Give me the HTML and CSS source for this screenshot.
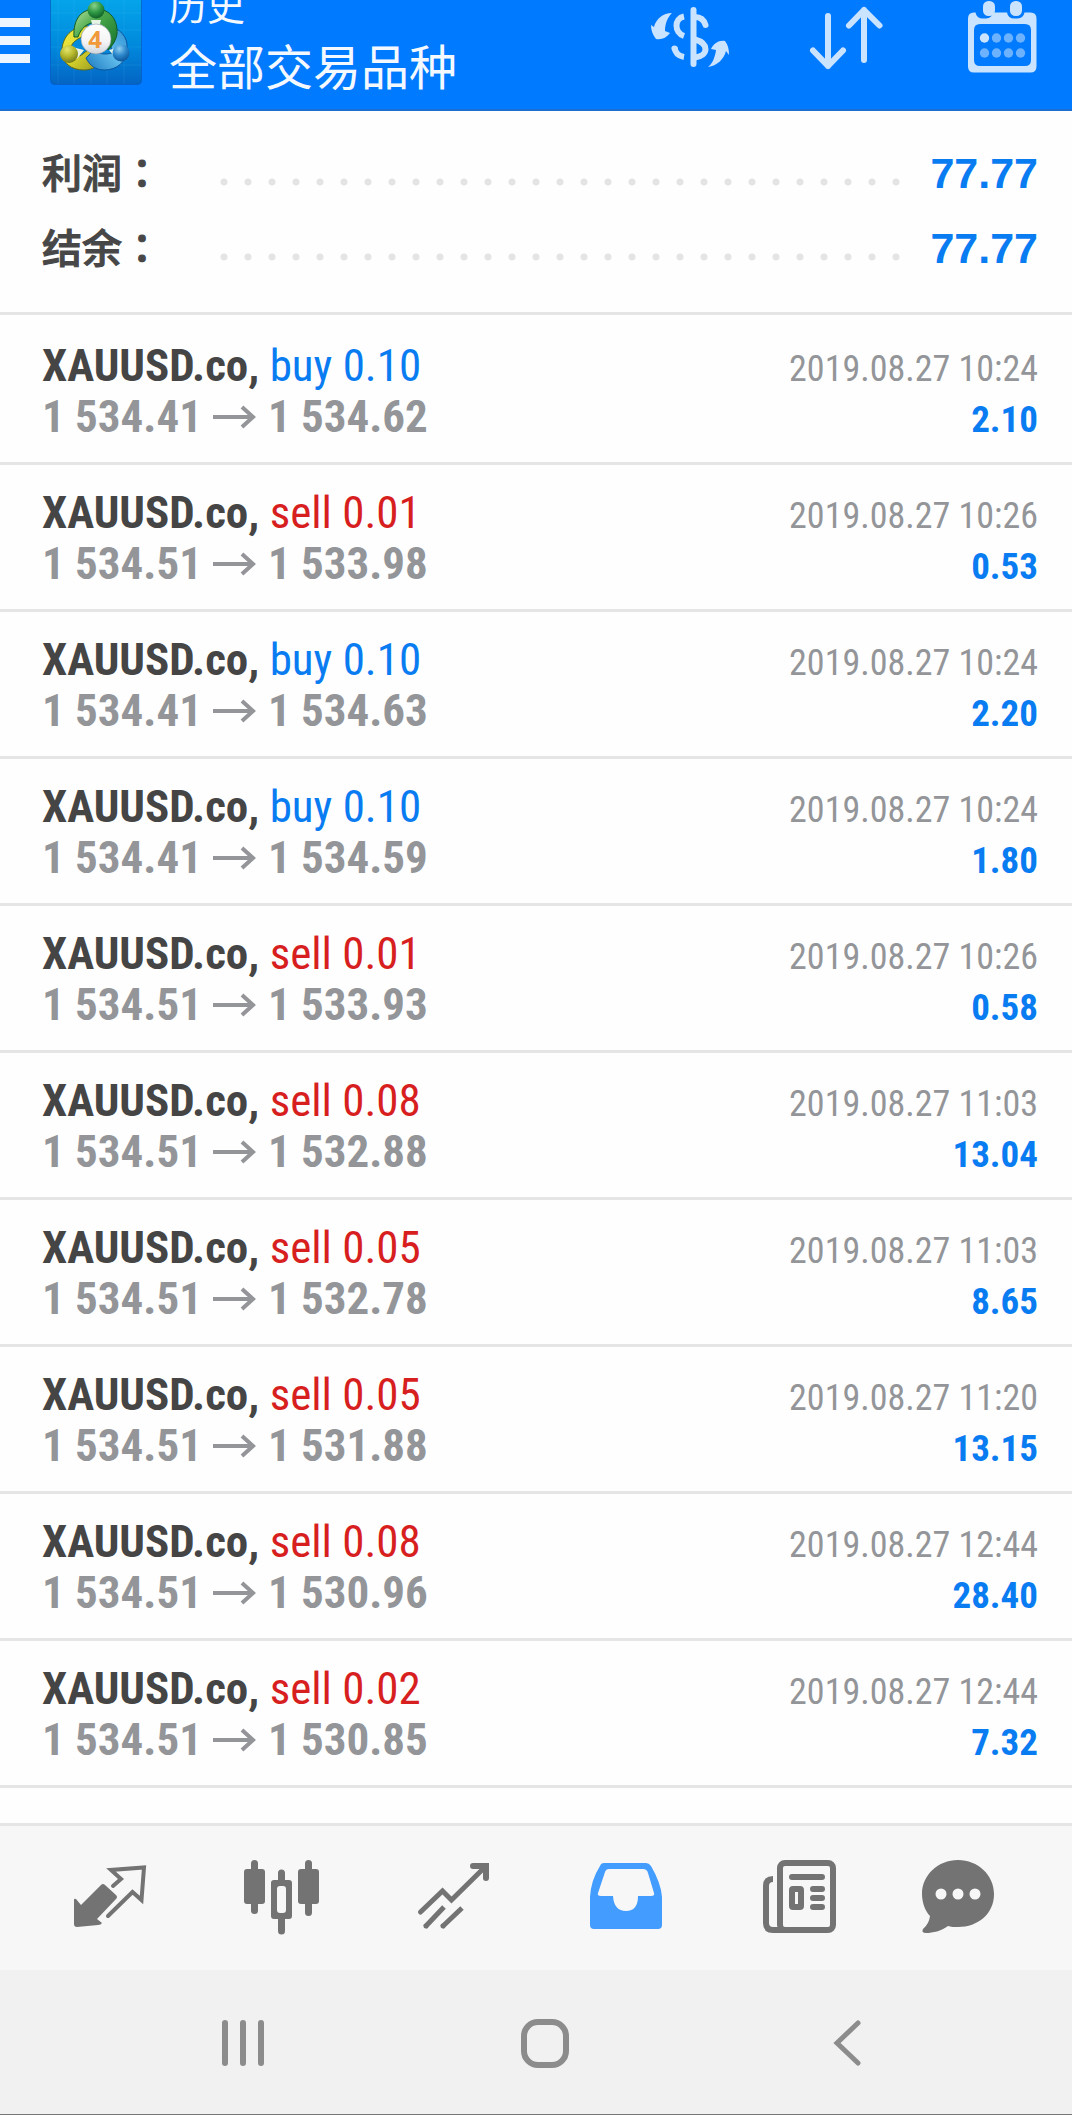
FILE: index.html
```html
<!DOCTYPE html>
<html lang="zh-CN">
<head>
<meta charset="utf-8">
<meta name="viewport" content="width=device-width, initial-scale=1">
<title>历史</title>
<link rel="stylesheet" href="styles.css">
</head>
<body>
<header class="app-bar">
  <button class="menu" type="button" aria-label="菜单">
    <svg width="30" height="45" viewBox="0 0 30 45"><path fill="#fff" fill-opacity=".93" d="M0 0h30v9H0zM0 18h30v9H0zM0 36h30v9H0z"/></svg>
  </button>
  <svg class="logo" width="92" height="85" viewBox="0 0 92 85" role="img" aria-label="MetaTrader 4">
    <defs>
      <linearGradient id="bg" x1="0" y1="0" x2="0" y2="1"><stop offset="0" stop-color="#05a5ea"/><stop offset=".55" stop-color="#0089dc"/><stop offset="1" stop-color="#0464c4"/></linearGradient>
      <linearGradient id="gr" x1="0" y1="0" x2="1" y2="1"><stop offset="0" stop-color="#b5e3a0"/><stop offset=".4" stop-color="#4aa84a"/><stop offset="1" stop-color="#12702c"/></linearGradient>
      <linearGradient id="ye" x1="0" y1="0" x2="1" y2="1"><stop offset="0" stop-color="#f4ef49"/><stop offset=".5" stop-color="#dbd42c"/><stop offset="1" stop-color="#8e9420"/></linearGradient>
      <linearGradient id="bl" x1="1" y1="0" x2="0" y2="1"><stop offset="0" stop-color="#2a8ed2"/><stop offset=".5" stop-color="#61bdeb"/><stop offset="1" stop-color="#1b78c0"/></linearGradient>
      <radialGradient id="gb" cx=".4" cy=".25" r=".8"><stop offset="0" stop-color="#8bd28a"/><stop offset=".5" stop-color="#2f9a46"/><stop offset="1" stop-color="#0c5824"/></radialGradient>
      <radialGradient id="yb" cx=".4" cy=".25" r=".8"><stop offset="0" stop-color="#e6e56f"/><stop offset=".5" stop-color="#b5b72b"/><stop offset="1" stop-color="#6a711a"/></radialGradient>
      <radialGradient id="bb" cx=".4" cy=".25" r=".8"><stop offset="0" stop-color="#8ed0f2"/><stop offset=".5" stop-color="#2d88cc"/><stop offset="1" stop-color="#0b4f94"/></radialGradient>
      <linearGradient id="wh" x1="0" y1="0" x2="0" y2="1"><stop offset="0" stop-color="#fff"/><stop offset=".6" stop-color="#f4f4f6"/><stop offset="1" stop-color="#cfd4da"/></linearGradient>
    </defs>
    <path fill="url(#bg)" stroke="#0a55b8" stroke-opacity=".6" d="M.5-1h91v81q0 4.500-4.500 4.500H5Q.5 84.500.5 80z"/>
    <path stroke="#7fd4ff" stroke-opacity=".1" fill="none" d="M8 0v84M24 0v84M41 0v84M57 0v84M74 0v84M0 13h92M0 30h92M0 47h92M0 65h92"/>
    <path fill="url(#ye)" stroke="#5f6a16" d="M38 26C22 26 12 37 12 51c0 12 9 19 22 19 9 0 14-4 17-9L38 50l-8 6-10-5c0-8 8-14 19-16z"/>
    <path fill="url(#bl)" stroke="#0b559c" d="M58 26c12 2 20 11 19 22 0 14-10 22-23 22-8 0-14-4-18-12l8-8c5 4 11 5 18 3z"/>
    <path fill="url(#gr)" stroke="#105a22" d="M24 37C23 19 31 9 46 9s22 12 21 25c-1 6-4 11-9 16l-4-15-8-13c-9 1-15 6-18 15z"/>
    <path fill="#e6f4e6" d="M41 20h10l-2 8h-6zM22 47l12 3-7 9zM70 47l-11 3 6 7z"/>
    <circle cx="46" cy="10" r="8.500" fill="url(#gb)"/>
    <circle cx="19" cy="54" r="9" fill="url(#yb)"/>
    <circle cx="71" cy="53" r="8.500" fill="url(#bb)"/>
    <circle cx="46" cy="39" r="15" fill="url(#wh)" stroke="#8b9bab" stroke-width=".6"/>
    <text class="logo-digit" x="45" y="48" text-anchor="middle">4</text>
  </svg>
  <div class="titles">
    <p class="section">历史</p>
    <h1 class="symbols">全部交易品种</h1>
  </div>
  <div class="actions">
    <button type="button" aria-label="交易品种">
      <svg width="80" height="74" viewBox="0 0 80 74" fill="none" stroke="#cae3ff" stroke-width="6" stroke-linecap="round">
        <path d="M43.500 10v54"/>
        <path d="M45 17c5 0 9 3 10.500 8"/>
        <path stroke-linecap="butt" d="M34 16.500c-10 2-10 16 0 19.500M34 57c-6-1-9-5-9.500-10"/>
        <path d="M24.500 48.500v0"/>
        <path stroke-linecap="butt" d="M45 39.500c14 4 14 16 0 18"/>
        <g fill="#cae3ff" stroke="none"><path d="M22 13C13 13 6 19 4 27l-3-2c0 6 2 10 5 14 6 1 10-1 14-6l-5-2c0-8 3-14 7-18z"/><path d="M58 67c9-1 16-8 18-16l3 4c0-6-1-10-4-14-6-1-11 2-14 8l5 1c-1 8-4 14-8 17z"/></g>
      </svg>
    </button>
    <button type="button" aria-label="排序">
      <svg width="80" height="74" viewBox="0 0 80 74" fill="none" stroke="#cae3ff" stroke-width="6" stroke-linecap="round" stroke-linejoin="round"><path d="M22 16v50M7 50.500L22 66l15-15.500M58 60V10M43 25.500L58 10l15.500 15.500"/></svg>
    </button>
    <button type="button" aria-label="日期">
      <svg width="80" height="74" viewBox="0 0 80 74">
        <path fill="#cae3ff" fill-rule="evenodd" d="M12 12.500h1.500q1 6 7.500 6h3q6-.5 7-6h14q1 6 7.500 6h3q6-.5 7-6h6q6 0 6 6v48q0 6-6 6H12q-6 0-6-6v-48q0-6 6-6zM18 24q-6 0-6 6v30q0 6 6 6h45q6 0 6-6V30q0-6-6-6z"/>
        <rect x="21" y="1" width="12" height="15" rx="5.500" fill="#cae3ff"/><rect x="48" y="1" width="12" height="15" rx="5.500" fill="#cae3ff"/>
        <g fill="#6db2ff"><circle cx="22.500" cy="38" r="4.700" fill="#cae3ff"/><circle cx="34.500" cy="38" r="4.700"/><circle cx="46.500" cy="38" r="4.700"/><circle cx="58.500" cy="38" r="4.700"/><circle cx="22.500" cy="53" r="4.700"/><circle cx="34.500" cy="53" r="4.700"/><circle cx="46.500" cy="53" r="4.700"/><circle cx="58.500" cy="53" r="4.700"/></g>
      </svg>
    </button>
  </div>
</header>
<svg class="defs" width="0" height="0" aria-hidden="true"><symbol id="to" viewBox="0 0 44 24"><path d="M0 12h41M29 2l11 10-11 10" fill="none" stroke="#939599" stroke-width="4"/></symbol></svg>
<main class="history">
  <dl class="summary">
    <div class="total"><dt>利润<span class="colon" lang="zh-Hant">：</span></dt><dd class="dots"></dd><dd class="sum">77.77</dd></div>
    <div class="total"><dt>结余<span class="colon" lang="zh-Hant">：</span></dt><dd class="dots"></dd><dd class="sum">77.77</dd></div>
  </dl>
  <ul class="deals">
    <li class="deal"><div class="line"><span class="symbol">XAUUSD.co, <span class="buy">buy 0.10</span></span><time>2019.08.27 10:24</time></div><div class="line"><span class="prices">1 534.41<svg class="to"><use href="#to"/></svg>1 534.62</span><b class="profit">2.10</b></div></li>
    <li class="deal"><div class="line"><span class="symbol">XAUUSD.co, <span class="sell">sell 0.01</span></span><time>2019.08.27 10:26</time></div><div class="line"><span class="prices">1 534.51<svg class="to"><use href="#to"/></svg>1 533.98</span><b class="profit">0.53</b></div></li>
    <li class="deal"><div class="line"><span class="symbol">XAUUSD.co, <span class="buy">buy 0.10</span></span><time>2019.08.27 10:24</time></div><div class="line"><span class="prices">1 534.41<svg class="to"><use href="#to"/></svg>1 534.63</span><b class="profit">2.20</b></div></li>
    <li class="deal"><div class="line"><span class="symbol">XAUUSD.co, <span class="buy">buy 0.10</span></span><time>2019.08.27 10:24</time></div><div class="line"><span class="prices">1 534.41<svg class="to"><use href="#to"/></svg>1 534.59</span><b class="profit">1.80</b></div></li>
    <li class="deal"><div class="line"><span class="symbol">XAUUSD.co, <span class="sell">sell 0.01</span></span><time>2019.08.27 10:26</time></div><div class="line"><span class="prices">1 534.51<svg class="to"><use href="#to"/></svg>1 533.93</span><b class="profit">0.58</b></div></li>
    <li class="deal"><div class="line"><span class="symbol">XAUUSD.co, <span class="sell">sell 0.08</span></span><time>2019.08.27 11:03</time></div><div class="line"><span class="prices">1 534.51<svg class="to"><use href="#to"/></svg>1 532.88</span><b class="profit">13.04</b></div></li>
    <li class="deal"><div class="line"><span class="symbol">XAUUSD.co, <span class="sell">sell 0.05</span></span><time>2019.08.27 11:03</time></div><div class="line"><span class="prices">1 534.51<svg class="to"><use href="#to"/></svg>1 532.78</span><b class="profit">8.65</b></div></li>
    <li class="deal"><div class="line"><span class="symbol">XAUUSD.co, <span class="sell">sell 0.05</span></span><time>2019.08.27 11:20</time></div><div class="line"><span class="prices">1 534.51<svg class="to"><use href="#to"/></svg>1 531.88</span><b class="profit">13.15</b></div></li>
    <li class="deal"><div class="line"><span class="symbol">XAUUSD.co, <span class="sell">sell 0.08</span></span><time>2019.08.27 12:44</time></div><div class="line"><span class="prices">1 534.51<svg class="to"><use href="#to"/></svg>1 530.96</span><b class="profit">28.40</b></div></li>
    <li class="deal"><div class="line"><span class="symbol">XAUUSD.co, <span class="sell">sell 0.02</span></span><time>2019.08.27 12:44</time></div><div class="line"><span class="prices">1 534.51<svg class="to"><use href="#to"/></svg>1 530.85</span><b class="profit">7.32</b></div></li>
  </ul>
</main>
<nav class="tabs">
  <button type="button" aria-label="行情">
    <svg width="80" height="80" viewBox="0 0 80 80"><path fill="#737373" d="M31 29Q33 27 35 29l11 10q2 2 0 4L27 63l5 4q-1 2-4 2L7 71q-3 0-3-3V44q0-2 2-1l5 6z"/><path fill="none" stroke="#737373" stroke-width="4" stroke-linecap="round" d="M43 30l8-7-10-9 33-2.500L71.500 44l-9-8L38 60"/></svg>
  </button>
  <button type="button" aria-label="图表">
    <svg width="80" height="80" viewBox="0 0 80 80" fill="#737373"><rect x="2" y="13" width="21" height="35" rx="3"/><rect x="9" y="4" width="7" height="54" rx="3.500"/><rect x="56" y="13" width="21" height="35" rx="3"/><rect x="63" y="4" width="7" height="56" rx="3.500"/><path fill-rule="evenodd" d="M32 24h4v-7a3.500 3.500 0 0 1 7 0v7h4q3 0 3 3v33q0 3-3 3h-4v12a3.500 3.500 0 0 1-7 0V63h-4q-3 0-3-3V27q0-3 3-3zm6 6q-3 0-3 3v21q0 3 3 3h3q3 0 3-3V33q0-3-3-3z"/></svg>
  </button>
  <button type="button" aria-label="交易">
    <svg width="80" height="80" viewBox="0 0 80 80" fill="none" stroke="#737373" stroke-width="5" stroke-linecap="round"><path d="M6.500 56l22-21 9 9L71 11"/><path stroke-width="6" d="M59 10h13v12"/><path stroke-linecap="butt" d="M11 71l19-20M28 71l20-19"/><path d="M12 70v0M29 70v0"/></svg>
  </button>
  <button type="button" aria-label="历史" aria-current="page">
    <svg width="80" height="80" viewBox="0 0 80 80"><path fill="#439cff" fill-rule="evenodd" d="M18 7h42q3 0 5 3 10 17 11 31v28q0 4-4 4H8q-4 0-4-4V41Q5 24 14 10q1-3 4-3zm5 6q-3 0-4 3l-7 21q-1 3 3 3h12q1 15 13 15t12-15h13q4 0 3-3l-6-20q-1-4-5-4z"/></svg>
  </button>
  <button type="button" aria-label="新闻">
    <svg width="80" height="80" viewBox="0 0 80 80" fill="none" stroke="#737373" stroke-width="6"><rect x="22" y="7" width="53" height="67" rx="5"/><path d="M15 23q-7 0-7 7v37q0 7 7 7h14"/><path stroke-linecap="round" d="M34 21h30M55 33h9M55 42h9M55 51h9"/><rect x="34" y="33" width="9" height="18" rx="1"/></svg>
  </button>
  <button type="button" aria-label="消息">
    <svg width="80" height="80" viewBox="0 0 80 80"><path fill="#737373" d="M40 4c20 0 36 15 36 34 0 20-16 33-36 33-4 0-7 0-10-1-7 5-15 7-22 7q-5 0-3-4 6-5 7-13C7 55 4 46 4 38 4 19 20 4 40 4z"/><g fill="#f7f7f7"><circle cx="23" cy="38" r="5.500"/><circle cx="40" cy="38" r="5.500"/><circle cx="57" cy="38" r="5.500"/></g></svg>
  </button>
</nav>
<footer class="system-nav">
  <button type="button" aria-label="最近"><svg width="50" height="50" viewBox="0 0 50 50"><path stroke="#8c8c8c" stroke-width="6" stroke-linecap="round" d="M7 5v40M25 5v40M43 5v40"/></svg></button>
  <button type="button" aria-label="主页"><svg width="50" height="50" viewBox="0 0 50 50"><rect x="4" y="4" width="42" height="43" rx="14" fill="none" stroke="#8c8c8c" stroke-width="6"/></svg></button>
  <button type="button" aria-label="返回"><svg width="50" height="50" viewBox="0 0 50 50"><path fill="none" stroke="#8c8c8c" stroke-width="5" stroke-linecap="round" d="M35 5L14 25l21 20"/></svg></button>
</footer>
</body>
</html>
```
FILE: styles.css
```css
* {
  box-sizing: border-box;
}

body {
  margin: 0;
  min-height: 100vh;
  display: flex;
  flex-direction: column;
  background: #fefefe;
  font-family: "Roboto Condensed", "Noto Sans CJK SC", sans-serif;
}

button {
  display: flex;
  justify-content: center;
  align-items: center;
  margin: 0;
  padding: 0;
  border: 0;
  background: none;
}

svg {
  display: block;
  flex: none;
}

p, h1, dl, dd, ul {
  margin: 0;
  padding: 0;
}

.defs {
  position: absolute;
}

/* Top bar */
.app-bar {
  display: flex;
  align-items: flex-start;
  height: 111px;
  padding-right: 20px;
  overflow: hidden;
  background: #007aff;
  border-bottom: 2px solid #1a6fd0;
  color: #f4f9ff;
}

.menu {
  margin-top: 18px;
}

.logo {
  margin-left: 20px;
}

.logo-digit {
  font: bold 24px "Open Sans", sans-serif;
  fill: #f09a3c;
}

.titles {
  flex: 1;
  margin: -20px 0 0 27px;
  font-family: "Noto Sans CJK SC", sans-serif;
  white-space: nowrap;
}

.section {
  font-size: 38px;
  line-height: 48px;
}

.symbols {
  font-size: 48px;
  font-weight: 400;
  line-height: 72px;
}

.actions {
  display: flex;
  gap: 56px;
}

.actions button {
  width: 100px;
}

/* Totals */
.history {
  flex: 1;
}

.summary {
  padding: 23px 34px 28px 42px;
  border-bottom: 3px solid #e5e5e5;
}

.total {
  display: flex;
  align-items: baseline;
  height: 75px;
}

.total dt {
  width: 178px;
  color: #474747;
  font: 500 40px/75px "Noto Sans CJK SC", sans-serif;
  -webkit-text-stroke: 1px #474747;
}

.colon {
  font-family: "Noto Sans CJK TC", sans-serif;
}

.dots {
  flex: 1;
  align-self: center;
  height: 8px;
  margin: 20px 28px 0 0;
  background: radial-gradient(circle at 4px 4px, #e4e4e4 3px, transparent 4px) 0 0 / 24px 8px;
}

.sum {
  color: #0a7cf2;
  font: bold 43px/75px "Liberation Sans", sans-serif;
}

/* Deals */
.deals {
  padding-top: 3px;
  list-style: none;
}

.deal {
  padding: 22px 34px 20px 42px;
  border-bottom: 3px solid #e5e5e5;
}

.line {
  display: flex;
  justify-content: space-between;
  align-items: baseline;
  height: 51px;
  font-size: 45px;
  line-height: 51px;
  white-space: nowrap;
}

.symbol {
  color: #454545;
  font-weight: 700;
}

.buy,
.sell {
  font-weight: 400;
}

.buy {
  color: #0a7cf2;
}

.sell {
  color: #d81f1f;
}

.prices {
  display: flex;
  align-items: center;
  gap: 11px;
  color: #939599;
  font-weight: 700;
}

.to {
  width: 44px;
  height: 24px;
}

time,
.profit {
  line-height: 44px;
}

time {
  color: #939599;
  font-size: 36px;
}

.profit {
  color: #0a7cf2;
  font-size: 37px;
}

/* Bottom tabs */
.tabs {
  display: grid;
  grid-template-columns: repeat(5, 172fr) 148fr;
  height: 147px;
  padding: 0 40px 4px 24px;
  border-top: 3px solid #e5e5e5;
  background: #f7f7f7;
}

.system-nav {
  display: grid;
  grid-template-columns: repeat(3, 1fr);
  height: 145px;
  padding: 2px 73px 0 92px;
  border-bottom: 1px solid #777;
  background: #f1f1f1;
}
```
